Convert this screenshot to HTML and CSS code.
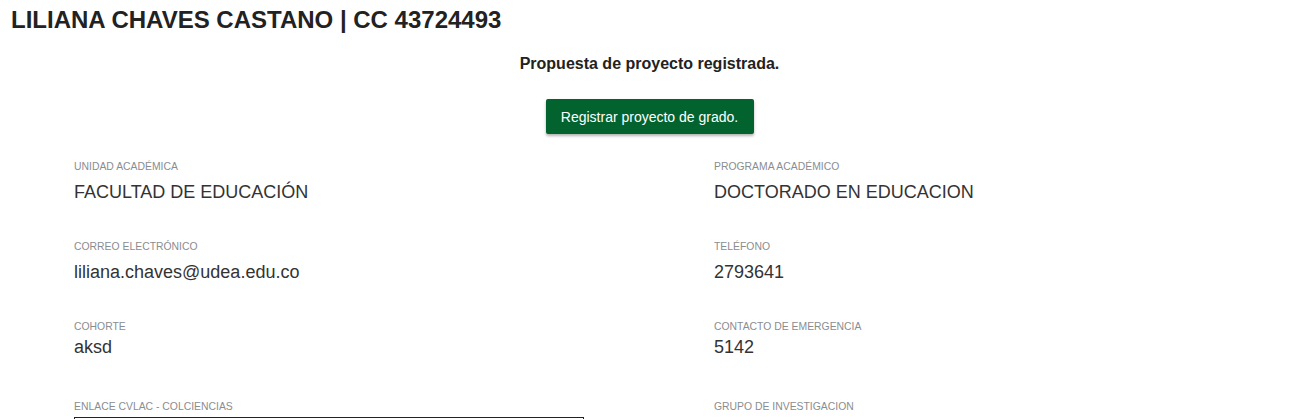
FILE: index.html
```html
<!DOCTYPE html>
<html lang="es">
<head>
<meta charset="utf-8">
<title>Perfil</title>
<link rel="stylesheet" href="styles.css">
</head>
<body>
<h2 class="title">LILIANA CHAVES CASTANO | CC 43724493</h2>
<div class="center">
  <p class="status">Propuesta de proyecto registrada.</p>
  <button class="btn">Registrar proyecto de grado.</button>
</div>
<div class="grid">
  <div class="field">
    <div class="label">Unidad Académica</div>
    <div class="value">FACULTAD DE EDUCACIÓN</div>
  </div>
  <div class="field">
    <div class="label">Programa Académico</div>
    <div class="value">DOCTORADO EN EDUCACION</div>
  </div>
  <div class="field">
    <div class="label">Correo electrónico</div>
    <div class="value">liliana.chaves@udea.edu.co</div>
  </div>
  <div class="field">
    <div class="label">Teléfono</div>
    <div class="value">2793641</div>
  </div>
  <div class="field tight">
    <div class="label">Cohorte</div>
    <div class="value">aksd</div>
  </div>
  <div class="field tight">
    <div class="label">Contacto de emergencia</div>
    <div class="value">5142</div>
  </div>
  <div class="field">
    <div class="label">Enlace CVLAC - Colciencias</div>
    <input class="input" type="text">
  </div>
  <div class="field">
    <div class="label">Grupo de investigacion</div>
  </div>
</div>
</body>
</html>
```

FILE: styles.css
```css
html, body {
  margin: 0;
  padding: 0;
  background: #fff;
  font-family: "Liberation Sans", Arial, sans-serif;
  color: #222;
  overflow: hidden;
}
.title {
  margin: 0;
  padding: 6px 0 0 11px;
  font-size: 24px;
  line-height: 28px;
  font-weight: bold;
  color: #222;
}
.center {
  display: flex;
  flex-direction: column;
  align-items: center;
  width: 1299px;
}
.status {
  margin: 20px 0 0;
  font-size: 16px;
  line-height: 20px;
  font-weight: bold;
  color: #222;
}
.btn {
  margin-top: 25px;
  width: 208px;
  height: 35px;
  border: 0;
  border-radius: 2px;
  background: #03632f;
  color: #fff;
  font-family: "Liberation Sans", Arial, sans-serif;
  font-size: 14px;
  box-shadow: 0 2px 3px rgba(0,0,0,0.3);
  padding: 0;
}
.grid {
  display: grid;
  grid-template-columns: 640px 640px;
  padding: 27px 0 0 74px;
}
.field {
  height: 80px;
}
.label {
  font-size: 10.4px;
  line-height: 12px;
  text-transform: uppercase;
  color: #8a8d90;
}
.value {
  margin-top: 8px;
  font-size: 18px;
  line-height: 22px;
  color: #333;
}
.tight .value {
  margin-top: 3px;
}
.input {
  display: block;
  margin-top: 4px;
  width: 510px;
  height: 30px;
  box-sizing: border-box;
  border: 1px solid #222;
  padding: 0;
}
```
